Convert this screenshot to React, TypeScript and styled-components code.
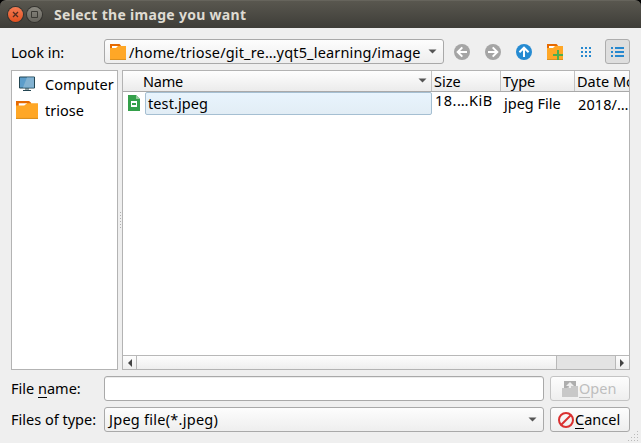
import React from "react";
import styled, { createGlobalStyle } from "styled-components";

const GlobalStyle = createGlobalStyle`
  * { box-sizing: border-box; }
  body { margin: 0; background: #efefef; overflow: hidden; }
`;

const Dialog = styled.div`
  width: 641px;
  height: 443px;
  display: flex;
  flex-direction: column;
  background: #efefef;
  color: #000;
  font: 14.5px/20px "Noto Sans", "Open Sans", sans-serif;
  white-space: pre;
`;

const TitleFrame = styled.div`
  height: 28px;
  flex: none;
  background: #000;
`;

const TitleBar = styled.header`
  height: 28px;
  display: flex;
  align-items: center;
  padding-left: 8px;
  border-radius: 6px 6px 0 0;
  border-top: 1px solid #66645c;
  background: linear-gradient(#59574f, #3e3d38);
`;

const WindowButton = styled.span<{ $close?: boolean }>`
  width: 15px;
  height: 15px;
  margin-right: 4px;
  border-radius: 50%;
  display: flex;
  box-shadow: 0 0 0 1px #34332f;
  background: ${(p) => (p.$close ? "linear-gradient(#f47c54, #e2501f)" : "linear-gradient(#8a8880, #66645d)")};
`;

const Label = styled.span<{ $spacing?: number; $size?: number; $shift?: number; $indent?: number }>`
  display: block;
  flex: none;
  letter-spacing: ${(p) => p.$spacing ?? 0}px;
  font-size: ${(p) => p.$size ?? 14.5}px;
  margin-top: ${(p) => p.$shift ?? 0}px;
  margin-left: ${(p) => p.$indent ?? 0}px;
`;

const Title = styled(Label)`
  color: #dfdbd2;
  font-weight: 700;
  margin-left: 8px;
`;

const Mnemonic = styled.span`
  border-bottom: 1px solid currentColor;
  display: inline-block;
  line-height: 17px;
`;

const Content = styled.main`
  flex: 1;
  display: flex;
  flex-direction: column;
  padding: 11px 11px 0;
`;

const FormRow = styled.div<{ $gap?: number }>`
  height: 25px;
  flex: none;
  display: grid;
  grid-template-columns: 93px 1fr auto;
  align-items: center;
  margin-bottom: ${(p) => p.$gap ?? 6}px;
`;

const Combo = styled.div<{ $pad: number }>`
  height: 25px;
  display: flex;
  align-items: center;
  padding: 0 6px 0 ${(p) => p.$pad}px;
  border: 1px solid #a9a9a9;
  border-radius: 3px;
  background: linear-gradient(#fdfdfd, #eeeeee);
  svg:last-child { margin-left: auto; }
`;

const Input = styled.input`
  height: 25px;
  width: 100%;
  border: 1px solid #a9a9a9;
  border-radius: 3px;
  background: #fff;
  outline: none;
  box-shadow: inset 0 1px #ececec;
`;

const Tools = styled.div`
  width: 186px;
  height: 25px;
  display: flex;
  align-items: center;
  padding-left: 2px;
`;

const Tool = styled.span<{ $active?: boolean }>`
  width: ${(p) => (p.$active ? 25 : 31)}px;
  height: 25px;
  display: flex;
  align-items: center;
  justify-content: center;
  border: ${(p) => (p.$active ? "1px solid #adadad" : "0")};
  border-radius: 3px;
  margin-left: ${(p) => (p.$active ? 4 : 0)}px;
  background: ${(p) => (p.$active ? "#dedede" : "transparent")};
`;

const PushButton = styled.button<{ $disabled?: boolean }>`
  width: 80px;
  height: 25px;
  margin-left: 6px;
  padding: 0 0 0 ${(p) => (p.$disabled ? 11 : 7)}px;
  display: flex;
  align-items: center;
  border: 1px solid ${(p) => (p.$disabled ? "#c4c4c4" : "#a9a9a9")};
  border-radius: 3px;
  background: linear-gradient(#fdfdfd, #eeeeee);
  color: ${(p) => (p.$disabled ? "#bebebe" : "#000")};
  font: inherit;
`;

const Panes = styled.section`
  height: 300px;
  display: grid;
  grid-template-columns: 107px 4px 508px;
  margin-bottom: 6px;
`;

const Pane = styled.div`
  border: 1px solid #b3b3b3;
  background: #fff;
  overflow: hidden;
  display: flex;
  flex-direction: column;
`;

const Place = styled.div`
  height: 26px;
  display: grid;
  grid-template-columns: 33px 1fr;
  align-items: center;
`;

const PlaceIcon = styled.span`
  display: flex;
  justify-content: center;
  padding: 0 3px 1px 0;
`;

const Handle = styled.div`
  display: flex;
  flex-direction: column;
  align-items: center;
  justify-content: center;
  gap: 2px;
`;

const HandleDot = styled.i`
  width: 1px;
  height: 1px;
  background: #b0b0b0;
`;

const HeaderRow = styled.div`
  height: 21px;
  flex: none;
  display: grid;
  grid-template-columns: 309px 69px 74px 1fr;
  border-bottom: 1px solid #a9a9a9;
  background: linear-gradient(#fefefe, #ebebeb);
`;

const HeaderCell = styled.div<{ $pad: number; $last?: boolean }>`
  display: flex;
  overflow: hidden;
  padding-left: ${(p) => p.$pad}px;
  border-right: ${(p) => (p.$last ? "0" : "1px solid #c3c3c3")};
  svg { margin: 7px 4px 0 auto; }
`;

const FileRow = styled.div`
  height: 23px;
  flex: none;
  display: grid;
  grid-template-columns: 22px 287px 69px 74px 1fr;
`;

const FileIconCell = styled.span`
  padding: 3px 0 0 4px;
`;

const Selected = styled.div`
  border: 1px solid #a5bfd2;
  border-radius: 2px;
  padding-left: 2px;
  background: linear-gradient(#e8f4fd, #e2edf5);
`;

const Cell = styled.div<{ $pad: number }>`
  padding-left: ${(p) => p.$pad}px;
`;

const ScrollBar = styled.div`
  height: 14px;
  margin-top: auto;
  display: grid;
  grid-template-columns: 14px 420px 1fr 14px;
  border-top: 1px solid #b8b8b8;
  background: #e3e3e3;
`;

const ScrollPart = styled.span<{ $side?: "left" | "right" }>`
  display: flex;
  align-items: center;
  justify-content: center;
  background: linear-gradient(#fdfdfd, #eeeeee);
  border-right: ${(p) => (p.$side === "right" ? "0" : "1px solid #b8b8b8")};
  border-left: ${(p) => (p.$side === "right" ? "1px solid #b8b8b8" : "0")};
`;

const Grip = styled.svg`
  align-self: flex-end;
  margin: -1px -9px 0 0;
`;

const Down = () => (
  <svg width="9" height="5" viewBox="0 0 9 5"><path d="M.5 .5h8L4.5 4.5z" fill="#555" /></svg>
);

const Arrow = ({ color, turn }: { color: string; turn: number }) => (
  <svg width="16" height="16" viewBox="0 0 16 16">
    <circle cx="8" cy="8" r="8" fill={color} />
    <path d="M13 8H4M8.3 3.4L3.7 8L8.3 12.6" transform={`rotate(${turn} 8 8)`} fill="none" stroke="#fff" strokeWidth="2" />
  </svg>
);

const Folder = ({ wide, plus }: { wide?: boolean; plus?: boolean }) => (
  <svg width={wide ? 22 : 16} height={wide ? 18 : 16} viewBox="0 0 16 16" preserveAspectRatio="none">
    <path d="M0 0h9.5l1.5 1.5V5H0z" fill="#e66a00" />
    <path d="M2 2h6v3H2z" fill="#fff" />
    <path d="M0 4h6l2-2h8v14H0z" fill="#ffa726" />
    <path d="M0 15h16v1H0z" fill="#dc901f" />
    {plus && <path d="M11 6v10M6 11h10" stroke="#4caf50" strokeWidth="2" />}
  </svg>
);

const Computer = () => (
  <svg width="16" height="16" viewBox="0 0 16 16">
    <path d="M.5 1h15v11H.5z" fill="#5c9dca" stroke="#234652" />
    <path d="M8 1.5h7v10H4z" fill="#83b2d1" />
    <path d="M6 12.5h4v1H6z" fill="#234652" />
    <path d="M4 14h8v1H4z" fill="#234652" />
  </svg>
);

const ImageFile = () => (
  <svg width="14" height="16" viewBox="0 0 14 16">
    <path d="M1 0h8l4 4v12H1z" fill="#34a04a" />
    <path d="M9 0l4 4H9z" fill="#91ca9b" />
    <path d="M4 6h6v6H4z" fill="#fff" />
    <path d="M5 8h4v2H5z" fill="#34a04a" />
  </svg>
);

const ViewIcon = ({ list }: { list?: boolean }) => (
  <svg width="13" height="10" viewBox="0 0 13 10" shapeRendering="crispEdges" fill="#2688cf">
    {[0, 4, 8].map((y) => list
      ? <g key={y}><path d={`M0 ${y}h2v2H0z`} /><path d={`M4 ${y}h9v2H4z`} /></g>
      : <path key={y} d={`M2 ${y}h2v2h-2zM6 ${y}h2v2h-2zM10 ${y}h2v2h-2z`} />)}
  </svg>
);

export default function App() {
  return (
    <Dialog>
      <GlobalStyle />
      <TitleFrame>
        <TitleBar>
          <WindowButton $close>
            <svg width="15" height="15"><path d="M5 5l5 5M10 5l-5 5" stroke="#522c20" strokeWidth="1.3" /></svg>
          </WindowButton>
          <WindowButton>
            <svg width="15" height="15"><path d="M4.5 4.5h6v6h-6z" fill="none" stroke="#3b3a35" /></svg>
          </WindowButton>
          <Title $size={14} $spacing={0.3}>Select the image you want</Title>
        </TitleBar>
      </TitleFrame>
      <Content>
        <FormRow>
          <Label>Look in:</Label>
          <Combo $pad={5}>
            <Folder />
            <Label $spacing={0.17} $indent={3}>/home/triose/git_re…yqt5_learning/image</Label>
            <Down />
          </Combo>
          <Tools>
            <Tool><Arrow color="#a5a5a5" turn={0} /></Tool>
            <Tool><Arrow color="#a5a5a5" turn={180} /></Tool>
            <Tool><Arrow color="#268bd2" turn={90} /></Tool>
            <Tool><Folder plus /></Tool>
            <Tool><ViewIcon /></Tool>
            <Tool $active><ViewIcon list /></Tool>
          </Tools>
        </FormRow>
        <Panes>
          <Pane>
            <Place><PlaceIcon><Computer /></PlaceIcon><Label>Computer</Label></Place>
            <Place><PlaceIcon><Folder wide /></PlaceIcon><Label>triose</Label></Place>
          </Pane>
          <Handle>{[0, 1, 2, 3, 4, 5].map((n) => <HandleDot key={n} />)}</Handle>
          <Pane>
            <HeaderRow>
              <HeaderCell $pad={20}><Label $spacing={-0.2}>Name</Label><Down /></HeaderCell>
              <HeaderCell $pad={2}><Label>Size</Label></HeaderCell>
              <HeaderCell $pad={2}><Label>Type</Label></HeaderCell>
              <HeaderCell $pad={2} $last><Label>Date Mo</Label></HeaderCell>
            </HeaderRow>
            <FileRow>
              <FileIconCell><ImageFile /></FileIconCell>
              <Selected><Label $spacing={0.1}>test.jpeg</Label></Selected>
              <Cell $pad={3}><Label $shift={-2} $spacing={0.5}>18.…KiB</Label></Cell>
              <Cell $pad={3}><Label $shift={1}>jpeg File</Label></Cell>
              <Cell $pad={3}><Label $shift={2} $spacing={0.1}>2018/…</Label></Cell>
            </FileRow>
            <ScrollBar>
              <ScrollPart $side="left"><svg width="5" height="8"><path d="M5 0v8L1 4z" fill="#444" /></svg></ScrollPart>
              <ScrollPart />
              <span />
              <ScrollPart $side="right"><svg width="5" height="8"><path d="M0 0v8l4-4z" fill="#444" /></svg></ScrollPart>
            </ScrollBar>
          </Pane>
        </Panes>
        <FormRow>
          <Label $shift={-2}>File <Mnemonic>n</Mnemonic>ame:</Label>
          <Input aria-label="File name" />
          <PushButton $disabled>
            <svg width="16" height="16" viewBox="0 0 16 16">
              <path d="M2 0h12v8H2z" fill="#adadad" />
              <path d="M0 7h5l2-2h9v11H0z" fill="#c8c8c8" />
              <path d="M8 1l4 4H9v2H7V5H4z" fill="#eee" />
            </svg>
            <Label $shift={-2} $indent={1}><Mnemonic>O</Mnemonic>pen</Label>
          </PushButton>
        </FormRow>
        <FormRow $gap={0}>
          <Label $shift={-2}>Files of type:</Label>
          <Combo $pad={4}><Label $shift={-2} $spacing={0.26}>Jpeg file(*.jpeg)</Label><Down /></Combo>
          <PushButton>
            <svg width="16" height="16" viewBox="0 0 16 16" fill="none" stroke="#da3030" strokeWidth="2">
              <circle cx="8" cy="8" r="7" /><path d="M13 3L3 13" />
            </svg>
            <Label $shift={-2} $indent={1}><Mnemonic>C</Mnemonic>ancel</Label>
          </PushButton>
        </FormRow>
        <Grip width="11" height="11" fill="#bbb">
          {[0, 1, 2, 3].flatMap((r) => Array.from({ length: r + 1 }, (_, c) => (
            <rect key={`${r}${c}`} x={9 - c * 3} y={r * 3} width="1" height="1" />
          )))}
        </Grip>
      </Content>
    </Dialog>
  );
}
